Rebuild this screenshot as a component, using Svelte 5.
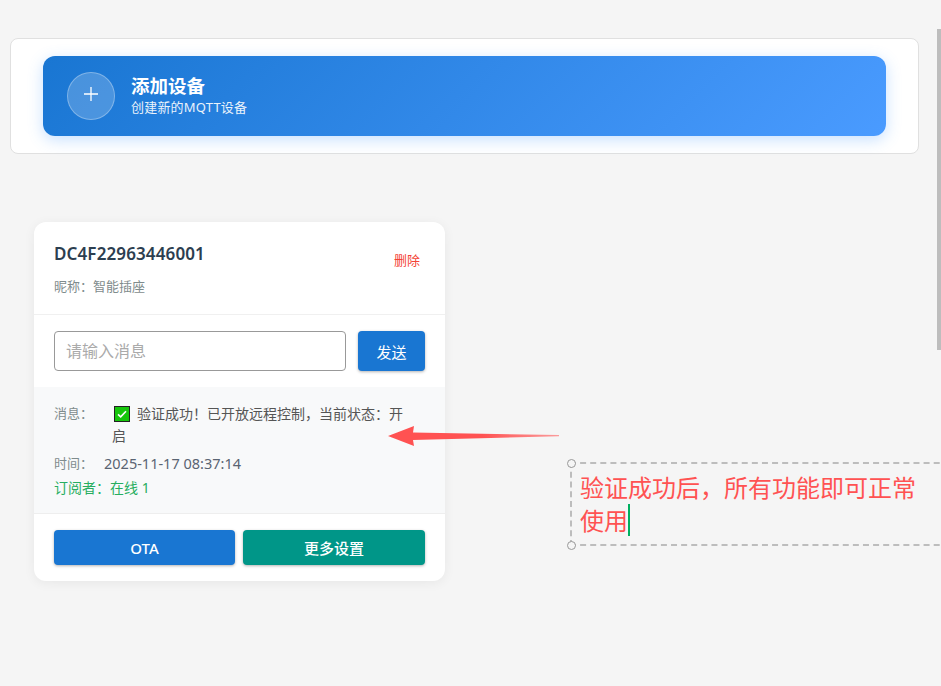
<script>
  let message = $state('');
</script>

<div class="page">
  <section class="panel">
    <button class="add">
      <span class="plus">
        <svg width="14" height="14" viewBox="0 0 14 14"><path d="M7 0v14M0 7h14" stroke="#fff" stroke-width="1.3" fill="none" /></svg>
      </span>
      <span class="add-text">
        <strong>添加设备</strong>
        <small>创建新的MQTT设备</small>
      </span>
    </button>
  </section>

  <article class="card">
    <header class="head">
      <div>
        <h3>DC4F22963446001</h3>
        <p>昵称：智能插座</p>
      </div>
      <span class="del">删除</span>
    </header>

    <div class="send">
      <input bind:value={message} placeholder="请输入消息" />
      <button class="btn blue">发送</button>
    </div>

    <div class="info">
      <div class="row msg">
        <span class="label">消息：</span>
        <span class="val"><svg class="check" width="16" height="16" viewBox="0 0 16 16"><rect x="0.5" y="0.5" width="15" height="15" fill="#16c60c" stroke="#222" /><path d="M4 8.4l2.7 2.5L12 5.2" stroke="#fff" stroke-width="1.6" fill="none" /></svg>验证成功！已开放远程控制，当前状态：开启</span>
      </div>
      <div class="row time">
        <span class="label">时间：</span>
        <span class="stamp">2025-11-17 08:37:14</span>
      </div>
      <div class="subs">订阅者：在线 1</div>
    </div>

    <footer class="actions">
      <button class="btn blue">OTA</button>
      <button class="btn teal">更多设置</button>
    </footer>
  </article>
</div>

<!-- annotation layer -->
<svg class="arrow" width="176" height="30" viewBox="0 0 176 30">
  <defs>
    <linearGradient id="tail" x1="0" x2="1" y1="0" y2="0">
      <stop offset="0" stop-color="#ff5252" />
      <stop offset="0.55" stop-color="#ff5252" />
      <stop offset="1" stop-color="#ff5252" stop-opacity="0.55" />
    </linearGradient>
  </defs>
  <path d="M3 15 L29 5 L28 11.5 L174 14 L174 15.2 L28 19 L29 25 Z" fill="url(#tail)" />
</svg>

<div class="note">
  <i class="dot top"></i>
  <i class="dot bottom"></i>
  <div class="note-text">验证成功后，所有功能即可正常使用<b class="caret"></b></div>
</div>

<div class="scroll"></div>

<style>
  :global(body) {
    background: #f5f5f5;
    overflow: hidden;
    font-family: "Noto Sans", "Noto Sans CJK SC", sans-serif;
  }
  .page {
    height: 686px;
    box-sizing: border-box;
    padding: 38px 22px 0 10px;
  }
  .panel {
    height: 116px;
    box-sizing: border-box;
    padding: 17px 32px;
    background: #fff;
    border: 1px solid #e0e0e0;
    border-radius: 8px;
  }
  .add {
    display: flex;
    align-items: center;
    gap: 16px;
    width: 100%;
    height: 80px;
    padding: 0 24px;
    border: none;
    border-radius: 12px;
    background: linear-gradient(135deg, #1976d2, #4a9bff);
    box-shadow: 0 4px 15px rgba(74, 155, 255, 0.3);
    color: #fff;
    font-family: inherit;
    text-align: left;
  }
  .plus {
    display: flex;
    align-items: center;
    justify-content: center;
    width: 48px;
    height: 48px;
    box-sizing: border-box;
    padding-bottom: 4px;
    border: 1px solid rgba(255, 255, 255, 0.3);
    border-radius: 50%;
    background: rgba(255, 255, 255, 0.2);
  }
  .add-text {
    display: flex;
    flex-direction: column;
    padding-bottom: 4px;
  }
  .add-text strong {
    font-size: 18.5px;
    line-height: 25px;
    font-weight: 700;
  }
  .add-text small {
    font-size: 13px;
    line-height: 18px;
    letter-spacing: 0.2px;
    opacity: 0.9;
  }
  .card {
    width: 411px;
    height: 359px;
    margin: 68px 0 0 24px;
    display: flex;
    flex-direction: column;
    overflow: hidden;
    background: #fff;
    border-radius: 12px;
    box-shadow: 0 2px 12px rgba(0, 0, 0, 0.06);
  }
  .head {
    height: 93px;
    box-sizing: border-box;
    display: flex;
    justify-content: space-between;
    padding: 20px 25px 0 20px;
    border-bottom: 1px solid #f0f0f0;
  }
  h3 {
    margin: 0;
    font-size: 17px;
    line-height: 24px;
    font-weight: 600;
    letter-spacing: 0.12px;
    color: #2c3e50;
  }
  .head p {
    margin: 11px 0 0;
    font-size: 13px;
    line-height: 18px;
    color: #7f8c8d;
  }
  .del {
    margin-top: 9px;
    font-size: 13px;
    line-height: 18px;
    color: #f44336;
  }
  .send {
    height: 72px;
    box-sizing: border-box;
    display: flex;
    gap: 12px;
    padding: 16px 20px;
  }
  input {
    flex: 1;
    min-width: 0;
    height: 40px;
    box-sizing: border-box;
    padding: 0 11px;
    border: 1px solid #999;
    border-radius: 4px;
    outline: none;
    font-family: inherit;
    font-size: 16px;
  }
  input::placeholder {
    color: #aaa;
  }
  .btn {
    border: none;
    border-radius: 4px;
    color: #fff;
    font-family: inherit;
    font-size: 15px;
    font-weight: 500;
    box-shadow: 0 1px 3px rgba(0, 0, 0, 0.3);
  }
  .send .btn {
    width: 67px;
    height: 40px;
    font-weight: 400;
  }
  .blue {
    background: #1976d2;
  }
  .teal {
    background: #009688;
  }
  .info {
    height: 127px;
    box-sizing: border-box;
    padding: 16px 20px 0;
    background: #f8f9fa;
    border-bottom: 1px solid #eee;
    font-size: 13px;
  }
  .row {
    display: flex;
  }
  .label {
    color: #7f8c8d;
    line-height: 20px;
  }
  .msg .label {
    width: 58px;
    flex: none;
  }
  .val {
    width: 294px;
    color: #555;
    font-size: 14px;
    line-height: 22px;
  }
  .check {
    vertical-align: -3px;
    margin: 0 7px 0 2px;
  }
  .time {
    margin-top: 6px;
  }
  .time .label {
    width: 50px;
    flex: none;
  }
  .stamp {
    color: #5a6472;
    font-size: 14.5px;
    line-height: 20px;
  }
  .subs {
    margin-top: 5px;
    color: #27ae60;
    font-size: 14px;
    line-height: 20px;
  }
  .actions {
    display: grid;
    grid-template-columns: 181fr 182fr;
    gap: 8px;
    padding: 16px 20px;
  }
  .actions .btn {
    height: 35px;
  }
  .arrow {
    position: absolute;
    left: 385px;
    top: 421px;
  }
  .note {
    position: absolute;
    left: 570px;
    top: 462px;
    width: 400px;
    height: 84px;
    box-sizing: border-box;
    border: 2px dashed #bdbdbd;
    border-right: none;
    padding: 8px 0 0 8px;
  }
  .note-text {
    width: 342px;
    font-size: 24px;
    line-height: 32px;
    color: #ff5252;
  }
  .caret {
    display: inline-block;
    width: 2px;
    height: 32px;
    vertical-align: -6px;
    background: #00b060;
  }
  .dot {
    position: absolute;
    left: -5.5px;
    width: 9px;
    height: 9px;
    box-sizing: border-box;
    background: #f5f5f5;
    border: 1.5px solid #999;
    border-radius: 50%;
  }
  .dot.top {
    top: -5.5px;
  }
  .dot.bottom {
    bottom: -5.5px;
  }
  .scroll {
    position: absolute;
    right: 0;
    top: 29px;
    width: 4px;
    height: 321px;
    background: #bdbdbd;
  }
</style>
